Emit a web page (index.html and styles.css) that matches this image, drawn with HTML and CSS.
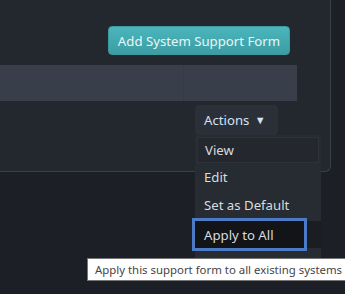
FILE: index.html
```html
<!DOCTYPE html>
<html lang="en">
<head>
    <meta charset="UTF-8">
    <title>System Support Forms</title>
    <link rel="stylesheet" href="styles.css">
</head>
<body>

    <div class="panel">
        <div class="toolbar">
            <button class="btn-add">Add System Support Form</button>
        </div>

        <div class="table">
            <div class="table-head">
                <div class="col-name"></div>
                <div class="col-actions"></div>
            </div>
            <div class="table-row">
                <div class="col-name"></div>
                <div class="col-actions">
                    <div class="dropdown">
                        <button class="btn-actions">Actions <span class="caret">&#9660;</span></button>

                        <!-- open menu -->
                        <ul class="menu">
                            <li class="menu-item first"><a href="#">View</a></li>
                            <li class="menu-item"><a href="#">Edit</a></li>
                            <li class="menu-item"><a href="#">Set as Default</a></li>
                            <li class="menu-item hover"><a href="#" class="focused">Apply to All</a></li>
                            <li class="menu-spacer"></li>
                        </ul>

                        <div class="tooltip">Apply this support form to all existing systems</div>
                    </div>
                </div>
            </div>
        </div>
    </div>

</body>
</html>
```

FILE: styles.css
```css
body {
    margin: 0;
    background: #1c1f25;
    font-family: "Noto Sans", "Open Sans", sans-serif;
    height: 294px;
    overflow: hidden;
}

.panel {
    width: 331px;
    height: 172px;
    background: #23272e;
    border-right: 1px solid #3a3f49;
    border-bottom: 1px solid #3a3f49;
    border-bottom-right-radius: 6px;
    box-sizing: border-box;
    padding-top: 26px;
}

.toolbar {
    display: flex;
    justify-content: flex-end;
    padding-right: 40px;
}

.btn-add {
    height: 29px;
    padding: 0 9px;
    border: 1px solid #3c9aa0;
    border-radius: 4px;
    background: linear-gradient(#4bb6bc, #3b9da3);
    color: #eaf6f6;
    font-family: inherit;
    font-size: 13.2px;
}

.table {
    width: 297px;
    margin-top: 10px;
}

.table-head {
    display: flex;
    height: 36px;
    background: #393e4b;
}

.table-head .col-name {
    width: 183px;
    border-right: 1px solid #363a47;
}

.table-row {
    display: flex;
}

.col-name {
    width: 184px;
}

.col-actions {
    flex: 1;
    padding: 4px 0 0 11px;
}

.dropdown {
    position: relative;
}

.btn-actions {
    width: 83px;
    height: 30px;
    border: none;
    border-radius: 4px;
    background: #2b2f38;
    color: #d4e3f6;
    font-family: inherit;
    font-size: 13.2px;
    text-align: left;
    padding: 0 0 0 9px;
}

.caret {
    font-size: 11px;
    margin-left: 2px;
    position: relative;
    top: -1px;
}

.menu {
    position: absolute;
    top: 30px;
    left: 0;
    width: 126px;
    margin: 0;
    padding: 2px 0 0;
    list-style: none;
    background: #272b32;
    box-sizing: border-box;
}

.menu-item {
    height: 28px;
    display: flex;
    align-items: center;
}

.menu-item a {
    color: #d8dbdf;
    text-decoration: none;
    font-size: 13.2px;
    padding: 0 9px;
}

.menu-item.first {
    height: 26px;
    margin: 0 2px;
    background: #24282e;
    border: 1px solid #2d3139;
    box-sizing: border-box;
}

.menu-item.first a {
    padding-left: 7px;
}

.menu-item.hover {
    height: 27px;
    margin-top: 2px;
    background: #1a1d21;
}

.menu-item .focused {
    display: flex;
    align-items: center;
    width: 109px;
    height: 27px;
    box-sizing: border-box;
    background: #121417;
    outline: 3px solid #4b7bc6;
}

.menu-spacer {
    height: 12px;
}

.tooltip {
    position: absolute;
    top: 153px;
    left: -108px;
    width: 262px;
    height: 23px;
    box-sizing: border-box;
    padding: 0 0 0 7px;
    background: #ffffff;
    border: 1px solid #767676;
    color: #454545;
    font-size: 11.4px;
    line-height: 21px;
    white-space: nowrap;
}
```
